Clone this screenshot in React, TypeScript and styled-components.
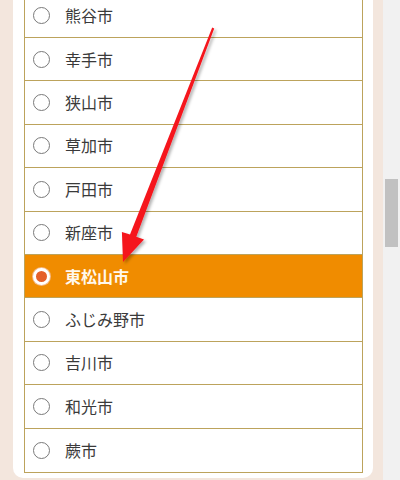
import styled, { createGlobalStyle } from 'styled-components';

const cities = [
  '熊谷市',
  '幸手市',
  '狭山市',
  '草加市',
  '戸田市',
  '新座市',
  '東松山市',
  'ふじみ野市',
  '吉川市',
  '和光市',
  '蕨市',
];

const selected = '東松山市';

const GlobalStyle = createGlobalStyle`
  html, body {
    margin: 0;
    padding: 0;
    overflow: hidden;
  }
  body {
    font-family: "Noto Sans CJK JP", "Noto Sans", sans-serif;
  }
`;

const App = () => {
  return (
    <>
      <GlobalStyle />
      <Page>
        <Main>
          <Panel>
            <List>
              {cities.map((city) => (
                <Row key={city} active={city === selected}>
                  <Radio active={city === selected} />
                  <Label active={city === selected}>{city}</Label>
                </Row>
              ))}
            </List>
          </Panel>
          <Arrow viewBox='0 0 383 480' width='383' height='480'>
            <defs>
              <filter id='shadow' x='-20%' y='-20%' width='140%' height='140%'>
                <feDropShadow dx='2' dy='2' stdDeviation='1.5' floodColor='#000' floodOpacity='0.3' />
              </filter>
            </defs>
            <polygon
              points='212.2,27.4 214.2,28.6 136.3,236.8 144,239.6 123,262 121.9,232 130,234.6'
              fill='#f5141e'
              filter='url(#shadow)'
            />
          </Arrow>
        </Main>
        <Scrollbar>
          <Thumb />
        </Scrollbar>
      </Page>
    </>
  );
};

export default App;

const Page = styled.div`
  width: 400px;
  height: 480px;
  display: flex;
  flex-direction: row;
  overflow: hidden;
`;

const Main = styled.div`
  position: relative;
  width: 383px;
  height: 480px;
  background: #f3e6dd;
  padding: 0 10px 0 13px;
  box-sizing: border-box;
`;

const Panel = styled.div`
  width: 360px;
  height: 478px;
  background: #ffffff;
  border-radius: 0 0 10px 10px;
  padding: 0 10px 0 11px;
  box-sizing: border-box;
  overflow: hidden;
`;

const List = styled.div`
  margin-top: -5.4px;
  border: 1px solid #bca35c;
  border-top: none;
  display: flex;
  flex-direction: column;
`;

const Row = styled.div<{ active?: boolean }>`
  height: 43.4px;
  box-sizing: border-box;
  display: flex;
  flex-direction: row;
  align-items: center;
  padding-left: 8px;
  gap: 15px;
  background: ${(p) => (p.active ? '#f08c00' : '#ffffff')};
  border-bottom: 1px solid #bca35c;
  &:last-child {
    border-bottom: none;
    height: 43.6px;
  }
`;

const Radio = styled.span<{ active?: boolean }>`
  width: 17px;
  height: 17px;
  box-sizing: border-box;
  border-radius: 50%;
  border: ${(p) => (p.active ? '3px solid #ffffff' : '1px solid #7a7a7a')};
  background: ${(p) => (p.active ? '#e5602a' : '#ffffff')};
  box-shadow: ${(p) => (p.active ? '0 0 0 1px #f3b98a' : 'none')};
  flex-shrink: 0;
`;

const Label = styled.span<{ active?: boolean }>`
  font-size: 16px;
  line-height: 1;
  color: ${(p) => (p.active ? '#fff8ec' : '#3a3a3a')};
  font-weight: ${(p) => (p.active ? 700 : 400)};
  margin-top: -1px;
`;

const Arrow = styled.svg`
  position: absolute;
  left: 0;
  top: 0;
  pointer-events: none;
`;

const Scrollbar = styled.div`
  width: 17px;
  height: 480px;
  background: #f1f1f1;
  padding: 179px 2px 0 2px;
  box-sizing: border-box;
`;

const Thumb = styled.div`
  width: 13px;
  height: 68px;
  background: #c1c1c1;
`;
